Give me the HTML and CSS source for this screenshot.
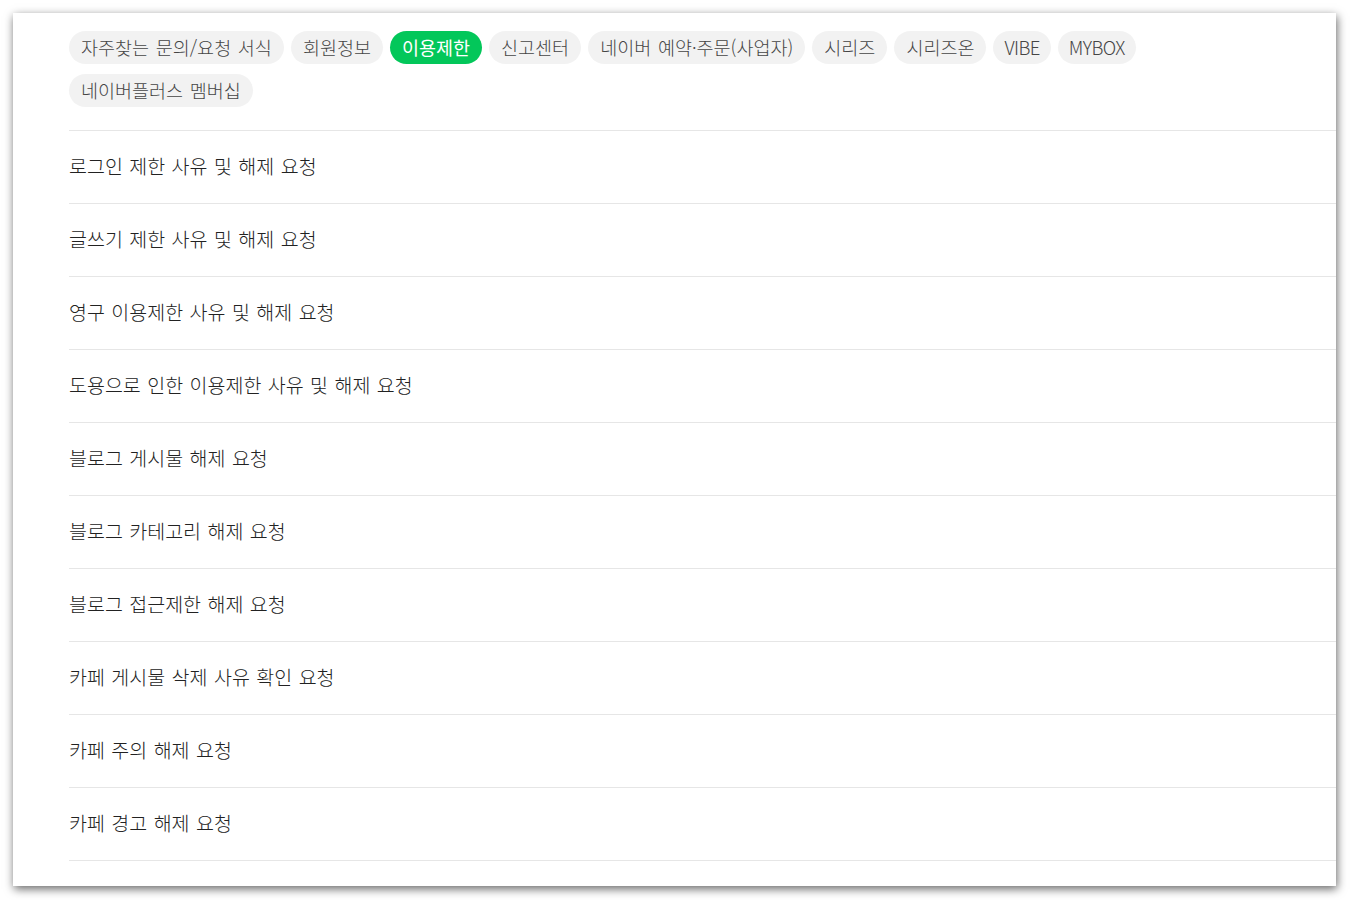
FILE: index.html
```html
<!DOCTYPE html>
<html lang="ko">
<head>
<meta charset="utf-8">
<title>이용제한</title>
<link rel="stylesheet" href="styles.css">
</head>
<body>
<div class="frame">
  <div class="chips">
    <span class="chip">자주찾는 문의/요청 서식</span>
    <span class="chip">회원정보</span>
    <span class="chip active">이용제한</span>
    <span class="chip">신고센터</span>
    <span class="chip">네이버 예약·주문(사업자)</span>
    <span class="chip">시리즈</span>
    <span class="chip">시리즈온</span>
    <span class="chip latin">VIBE</span>
    <span class="chip latin">MYBOX</span>
    <span class="chip">네이버플러스 멤버십</span>
  </div>
  <ul class="list">
    <li class="item">로그인 제한 사유 및 해제 요청</li>
    <li class="item">글쓰기 제한 사유 및 해제 요청</li>
    <li class="item">영구 이용제한 사유 및 해제 요청</li>
    <li class="item">도용으로 인한 이용제한 사유 및 해제 요청</li>
    <li class="item">블로그 게시물 해제 요청</li>
    <li class="item">블로그 카테고리 해제 요청</li>
    <li class="item">블로그 접근제한 해제 요청</li>
    <li class="item">카페 게시물 삭제 사유 확인 요청</li>
    <li class="item">카페 주의 해제 요청</li>
    <li class="item">카페 경고 해제 요청</li>
  </ul>
</div>
</body>
</html>
```

FILE: styles.css
```css
html, body {
  margin: 0;
  padding: 0;
  background: #ffffff;
}
body {
  padding: 13px 14px 14px 13px;
  font-family: "Noto Sans CJK KR", "Noto Sans", sans-serif;
}
.frame {
  background: #ffffff;
  height: 873px;
  box-sizing: border-box;
  padding: 18px 0 0 56px;
  box-shadow: 1px 3px 9px rgba(0, 0, 0, 0.6);
}
.chips {
  display: flex;
  flex-wrap: wrap;
  gap: 10px 7px;
  padding-right: 56px;
  padding-bottom: 23px;
  border-bottom: 1px solid #e6e6e6;
}
.chip {
  display: inline-flex;
  align-items: center;
  height: 33px;
  padding: 0 12px;
  border-radius: 17px;
  background: #f2f2f2;
  color: #454545;
  font-size: 18.5px;
  font-weight: 300;
  line-height: 1;
  word-spacing: 1.5px;
  white-space: nowrap;
}
.chip.latin {
  letter-spacing: -0.6px;
  padding: 0 11px;
}
.chip.active {
  background: #03c75a;
  color: #ffffff;
  font-weight: 400;
}
.list {
  list-style: none;
  margin: 0;
  padding: 0;
}
.item {
  height: 73px;
  box-sizing: border-box;
  padding-bottom: 3px;
  border-bottom: 1px solid #e6e6e6;
  display: flex;
  align-items: center;
  color: #222222;
  font-size: 19.5px;
  font-weight: 300;
  word-spacing: 1px;
}
```
